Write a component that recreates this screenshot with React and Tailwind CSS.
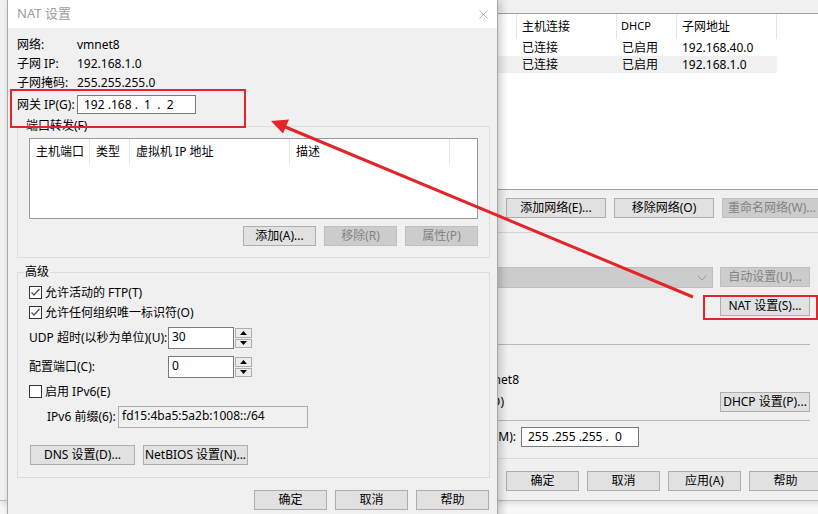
import React from 'react';
import { X } from 'lucide-react';

const Btn = ({ children, w = 'w-[73px]', disabled = false }) => (
    <div
        className={`${w} h-[20px] shrink-0 flex items-center justify-center border text-[12px] leading-none whitespace-nowrap ${
            disabled ? 'bg-[#cccccc] border-[#bfbfbf] text-[#838383]' : 'bg-[#e1e1e1] border-[#adadad] text-black'
        }`}
    >
        {children}
    </div>
);

const CheckBox = ({ checked, label }) => (
    <div className="h-[17px] flex items-center gap-[3px]">
        <span className="w-[13px] h-[13px] border border-[#333333] bg-white flex items-center justify-center">
            {checked && (
                <svg width="11" height="11" viewBox="0 0 11 11">
                    <polyline points="1.5,5.5 4,8 9.5,2" fill="none" stroke="#555555" strokeWidth="1.4" />
                </svg>
            )}
        </span>
        <span>{label}</span>
    </div>
);

const SpinInput = ({ value }) => (
    <div className="flex h-[22px]">
        <div className="w-[66px] h-full border border-[#7a7a7a] bg-white pl-[3px] pb-[3px] flex items-center leading-none">{value}</div>
        <div className="w-[18px] h-full flex flex-col gap-px py-px pl-px">
            <div className="flex-1 border border-[#adadad] bg-[#ececec] flex items-center justify-center">
                <svg width="7" height="4" viewBox="0 0 7 4"><polygon points="0,4 3.5,0 7,4" fill="#000" /></svg>
            </div>
            <div className="flex-1 border border-[#adadad] bg-[#ececec] flex items-center justify-center">
                <svg width="7" height="4" viewBox="0 0 7 4"><polygon points="0,0 7,0 3.5,4" fill="#000" /></svg>
            </div>
        </div>
    </div>
);

const BackWindow = () => (
    <div className="absolute left-0 top-0 w-[830px] h-[501px] bg-[#f0f0f0] border-b border-[#bdbdbd] shadow-[0_2px_6px_rgba(0,0,0,0.12)] flex flex-col pt-[13px] text-[12px] text-black">
        {/* network list */}
        <div className="ml-[300px] w-[530px] h-[177px] shrink-0 bg-white border-y border-l border-[#a0a0a0]">
            <div className="h-[25px] flex">
                <div className="w-[216px] border-r border-[#e5e5e5]" />
                <div className="w-[100px] border-r border-[#e5e5e5] pl-[5px] flex items-center">主机连接</div>
                <div className="w-[60px] border-r border-[#e5e5e5] pl-[4px] flex items-center text-[11px]">DHCP</div>
                <div className="w-[100px] border-r border-[#e5e5e5] pl-[5px] flex items-center">子网地址</div>
            </div>
            <div className="w-[476px] h-[17px] flex items-center">
                <span className="w-[221px] shrink-0" />
                <span className="w-[100px] shrink-0">已连接</span>
                <span className="w-[60px] shrink-0">已启用</span>
                <span>192.168.40.0</span>
            </div>
            <div className="w-[476px] h-[17px] flex items-center bg-[#f0f0f0]">
                <span className="w-[221px] shrink-0" />
                <span className="w-[100px] shrink-0">已连接</span>
                <span className="w-[60px] shrink-0">已启用</span>
                <span>192.168.1.0</span>
            </div>
        </div>

        <div className="mt-[8px] ml-[506px] flex gap-[8px]">
            <Btn w="w-[100px]">添加网络(E)...</Btn>
            <Btn w="w-[100px]">移除网络(O)</Btn>
            <Btn w="w-[100px]" disabled>重命名网络(W)...</Btn>
        </div>

        <div className="mt-[14px] ml-[300px] w-[530px] h-px bg-[#d5d5d5]" />

        <div className="mt-[34px] ml-[300px] flex gap-[7px] h-[21px]">
            <div className="w-[413px] h-full bg-[#cccccc] border border-[#bfbfbf] flex items-center justify-end pr-[5px]">
                <svg width="10" height="6" viewBox="0 0 10 6"><polyline points="0.5,0.5 5,5 9.5,0.5" fill="none" stroke="#9a9a9a" strokeWidth="1" /></svg>
            </div>
            <div className="h-[21px] flex">
                <Btn w="w-[90px]" disabled>自动设置(U)...</Btn>
            </div>
        </div>

        <div className="mt-[8px] ml-[720px] flex">
            <Btn w="w-[90px]">NAT 设置(S)...</Btn>
        </div>

        <div className="mt-[28px] ml-[300px] w-[510px] h-px bg-[#b8b8b8]" />

        <div className="mt-[26px] ml-[300px] w-[219px] h-[17px] flex items-center justify-end">
            <span className="shrink-0">vmnet8</span>
        </div>

        <div className="mt-[4px] ml-[300px] w-[510px] h-[20px] flex items-center justify-between">
            <div className="w-[204px] flex justify-end">
                <span className="shrink-0 whitespace-nowrap">使用本地 DHCP 服务将 IP 地址分配给虚拟机(D)</span>
            </div>
            <Btn w="w-[90px]">DHCP 设置(P)...</Btn>
        </div>

        <div className="mt-[8px] ml-[300px] w-[510px] h-px bg-[#b8b8b8]" />

        <div className="mt-[6px] ml-[300px] h-[20px] flex items-center gap-[5px]">
            <div className="w-[216px] flex justify-end">
                <span className="shrink-0 whitespace-nowrap">子网掩码(M):</span>
            </div>
            <div className="w-[118px] h-[20px] border border-[#7a7a7a] bg-white pl-[6px] flex items-center whitespace-pre">255 .255 .255 .  0</div>
        </div>

        <div className="mt-[11px] ml-[300px] w-[530px] h-px bg-[#dadada]" />

        <div className="mt-[12px] ml-[506px] flex gap-[8px]">
            <Btn>确定</Btn>
            <Btn>取消</Btn>
            <Btn>应用(A)</Btn>
            <Btn>帮助</Btn>
        </div>
    </div>
);

const NatDialog = () => (
    <div className="absolute left-[7px] top-0 w-[491px] h-[530px] border-x border-[#a8a8a8] bg-[#f0f0f0] shadow-[3px_0_8px_rgba(0,0,0,0.2)] flex flex-col text-[12px] text-black">
        <div className="h-[28px] shrink-0 bg-white flex items-center justify-between pl-[9px] pr-[6px]">
            <span className="text-[#9d9d9d] text-[13px]">NAT 设置</span>
            <X size={15} strokeWidth={1} className="text-[#8a8a8a]" />
        </div>

        <div className="flex flex-col pl-[9px] pr-[7px] pt-[7px]">
            <div className="h-[19px] flex items-center"><span className="w-[60px]">网络:</span><span>vmnet8</span></div>
            <div className="h-[19px] flex items-center"><span className="w-[60px]">子网 IP:</span><span>192.168.1.0</span></div>
            <div className="h-[19px] flex items-center"><span className="w-[60px]">子网掩码:</span><span>255.255.255.0</span></div>
            <div className="mt-[3px] h-[19px] flex items-center">
                <span className="w-[60px]">网关 IP(G):</span>
                <div className="w-[119px] h-[19px] border border-[#7a7a7a] bg-white pl-[6px] flex items-center whitespace-pre">192 .168 .  1  .  2</div>
            </div>

            {/* port forwarding */}
            <fieldset className="mt-[4px] border border-[#dcdcdc] px-[11px] pb-[11px]">
                <legend className="ml-[-4px] px-[1px] leading-[16px]">端口转发(F)</legend>
                <div className="mt-[4px] h-[81px] border border-[#999999] bg-white">
                    <div className="h-[25px] flex">
                        <div className="w-[60px] border-r border-[#e5e5e5] pl-[6px] flex items-center">主机端口</div>
                        <div className="w-[40px] border-r border-[#e5e5e5] pl-[6px] flex items-center">类型</div>
                        <div className="w-[160px] border-r border-[#e5e5e5] pl-[6px] flex items-center">虚拟机 IP 地址</div>
                        <div className="w-[160px] border-r border-[#e5e5e5] pl-[6px] flex items-center">描述</div>
                    </div>
                </div>
                <div className="mt-[7px] flex justify-end gap-[8px]">
                    <Btn w="w-[73px]">添加(A)...</Btn>
                    <Btn w="w-[73px]" disabled>移除(R)</Btn>
                    <Btn w="w-[73px]" disabled>属性(P)</Btn>
                </div>
            </fieldset>

            {/* advanced */}
            <fieldset className="mt-[6px] border border-[#dcdcdc] pl-[11px] pb-[12px]">
                <legend className="ml-[-5px] px-[1px] leading-[16px]">高级</legend>
                <div className="mt-[4px]"><CheckBox checked label="允许活动的 FTP(T)" /></div>
                <div className="mt-[3px]"><CheckBox checked label="允许任何组织唯一标识符(O)" /></div>
                <div className="mt-[6px] flex items-center">
                    <span className="w-[139px]">UDP 超时(以秒为单位)(U):</span>
                    <SpinInput value="30" />
                </div>
                <div className="mt-[7px] flex items-center">
                    <span className="w-[139px]">配置端口(C):</span>
                    <SpinInput value="0" />
                </div>
                <div className="mt-[5px]"><CheckBox label="启用 IPv6(E)" /></div>
                <div className="mt-[6px] pl-[18px] flex items-center">
                    <span className="w-[71px]">IPv6 前缀(6):</span>
                    <div className="w-[190px] h-[22px] border border-[#adadad] bg-[#f0f0f0] pl-[3px] pb-[3px] flex items-center">fd15:4ba5:5a2b:1008::/64</div>
                </div>
                <div className="mt-[17px] pl-px flex gap-[8px]">
                    <Btn w="w-[105px]">DNS 设置(D)...</Btn>
                    <Btn w="w-[105px]">NetBIOS 设置(N)...</Btn>
                </div>
            </fieldset>

            <div className="mt-[12px] pr-px flex justify-end gap-[8px]">
                <Btn>确定</Btn>
                <Btn>取消</Btn>
                <Btn>帮助</Btn>
            </div>
        </div>
    </div>
);

const Annotations = () => (
    <>
        <div className="absolute left-[10px] top-[89px] w-[236px] h-[39px] border-2 border-[#e3242b]" />
        <div className="absolute left-[703px] top-[295px] w-[115px] h-[25px] border-2 border-[#e3242b]" />
        <svg className="absolute left-0 top-0 pointer-events-none" width="818" height="514" viewBox="0 0 818 514">
            <line x1="693" y1="297" x2="283" y2="126" stroke="#e3242b" strokeWidth="3" />
            <polygon points="271,121 283,133.5 289,119.5" fill="#e3242b" />
        </svg>
    </>
);

export default function App() {
    return (
        <div className="relative w-[818px] h-[514px] overflow-hidden bg-[#f7f7f7] font-['Noto_Sans','Noto_Sans_CJK_SC',sans-serif]">
            <BackWindow />
            <NatDialog />
            <Annotations />
        </div>
    );
}
